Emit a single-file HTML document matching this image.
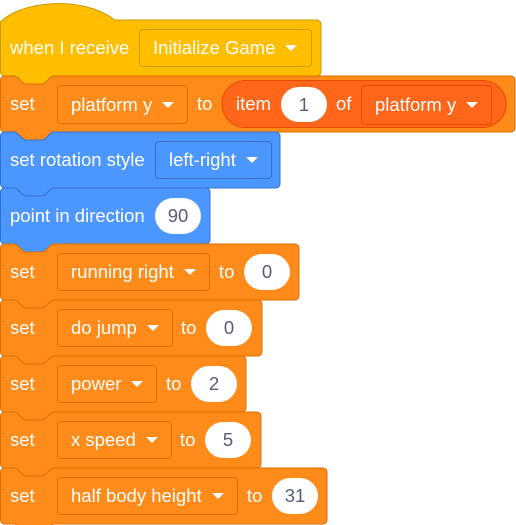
<!DOCTYPE html>
<html><head><meta charset="utf-8"><style>
html,body{margin:0;padding:0;background:#fff;width:516px;height:525px;overflow:hidden;position:relative;font-family:"Liberation Sans",Arial,sans-serif}
svg{position:absolute;left:0;top:0}
.t{position:absolute;color:#fff;font-size:18.5px;line-height:20px;white-space:nowrap}
.dd{position:absolute;box-sizing:border-box;border:1px solid rgba(0,0,0,.15);border-radius:4px;color:#fff;font-size:18.5px;display:flex;align-items:center;padding-left:13px;white-space:nowrap}
.dd::after{content:"";display:inline-block;margin-left:10px;border-left:6px solid transparent;border-right:6px solid transparent;border-top:6px solid #fff;border-radius:1px}
.ov{position:absolute;box-sizing:border-box;background:#fff;border-radius:20px;color:#575e75;font-size:18.5px;display:flex;align-items:center;justify-content:center}
</style></head><body>
<svg width="516" height="525" id="s"></svg>
<script>
function blk(y0,y1,w,fill,st){
 const n=14;
 return `<path fill="${fill}" stroke="${st}" stroke-width="1" d="M0.5,${y0+4} A4,4 0 0 1 4.5,${y0} H${n} c2,0 3,1 4,2 l4,4 c1,1 2,2 4,2 h16 c2,0 3,-1 4,-2 l4,-4 c1,-1 2,-2 4,-2 H${w-4} A4,4 0 0 1 ${w},${y0+4} V${y1-4} A4,4 0 0 1 ${w-4},${y1} H${n+40} c-2,0 -3,1 -4,2 l-4,4 c-1,1 -2,2 -4,2 h-16 c-2,0 -3,-1 -4,-2 l-4,-4 c-1,-1 -2,-2 -4,-2 H4.5 A4,4 0 0 1 0.5,${y1-4} Z"/>`;
}
const O='#FF8C1A',OS='#DB6E00',B='#4C97FF',BS='#3373CC';
let h='';
h+=`<path fill="#FFBF00" stroke="#CC9900" stroke-width="1" d="M0.5,22 C20,2 80,-6 115,20 H317 A4,4 0 0 1 321,24 V72 A4,4 0 0 1 317,76 H54 c-2,0 -3,1 -4,2 l-4,4 c-1,1 -2,2 -4,2 h-16 c-2,0 -3,-1 -4,-2 l-4,-4 c-1,-1 -2,-2 -4,-2 H4.5 A4,4 0 0 1 0.5,72 Z"/>`;
h+=blk(76,132,515,O,OS);
h+=`<rect x="222" y="80.5" width="284" height="47" rx="23.5" fill="#FF661A" stroke="#E64D00"/>`;
h+=blk(132,188,280,B,BS);
h+=blk(188,244,210,B,BS);
h+=blk(244,300,299,O,OS);
h+=blk(300,356,262,O,OS);
h+=blk(356,412,246,O,OS);
h+=blk(412,468,261,O,OS);
h+=blk(468,524,327,O,OS);
document.getElementById('s').innerHTML=h;
</script>
<div class="t" style="left:10px;top:38px">when I receive</div>
<div class="dd" style="left:139px;top:29px;width:173px;height:38px;background:#FFBF00;border-color:#CC9900">Initialize Game</div>

<div class="t" style="left:10px;top:94px">set</div>
<div class="dd" style="left:57px;top:85px;width:131px;height:39px;background:#FF8C1A;border-color:#DB6E00">platform y</div>
<div class="t" style="left:197px;top:94px">to</div>
<div class="t" style="left:236px;top:94px">item</div>
<div class="ov" style="left:281px;top:87px;width:46px;height:35px">1</div>
<div class="t" style="left:336px;top:94px">of</div>
<div class="dd" style="left:361px;top:85px;width:131px;height:40px;background:#FF661A;border-color:#E64D00">platform y</div>

<div class="t" style="left:10px;top:150px">set rotation style</div>
<div class="dd" style="left:155px;top:141px;width:117px;height:38px;background:#4C97FF;border-color:#3373CC">left-right</div>

<div class="t" style="left:10px;top:206px">point in direction</div>
<div class="ov" style="left:155px;top:198px;width:46px;height:36px">90</div>

<div class="t" style="left:10px;top:262px">set</div>
<div class="dd" style="left:57px;top:253px;width:153px;height:38px;background:#FF8C1A;border-color:#DB6E00">running right</div>
<div class="t" style="left:219px;top:262px">to</div>
<div class="ov" style="left:244px;top:254px;width:46px;height:36px">0</div>

<div class="t" style="left:10px;top:318px">set</div>
<div class="dd" style="left:57px;top:309px;width:116px;height:38px;background:#FF8C1A;border-color:#DB6E00">do jump</div>
<div class="t" style="left:181px;top:318px">to</div>
<div class="ov" style="left:206px;top:310px;width:46px;height:36px">0</div>

<div class="t" style="left:10px;top:374px">set</div>
<div class="dd" style="left:57px;top:365px;width:100px;height:38px;background:#FF8C1A;border-color:#DB6E00">power</div>
<div class="t" style="left:166px;top:374px">to</div>
<div class="ov" style="left:191px;top:366px;width:46px;height:36px">2</div>

<div class="t" style="left:10px;top:430px">set</div>
<div class="dd" style="left:57px;top:421px;width:115px;height:38px;background:#FF8C1A;border-color:#DB6E00">x speed</div>
<div class="t" style="left:180px;top:430px">to</div>
<div class="ov" style="left:205px;top:422px;width:46px;height:36px">5</div>

<div class="t" style="left:10px;top:486px">set</div>
<div class="dd" style="left:57px;top:477px;width:181px;height:38px;background:#FF8C1A;border-color:#DB6E00">half body height</div>
<div class="t" style="left:247px;top:486px">to</div>
<div class="ov" style="left:272px;top:478px;width:46px;height:36px">31</div>
</body></html>
